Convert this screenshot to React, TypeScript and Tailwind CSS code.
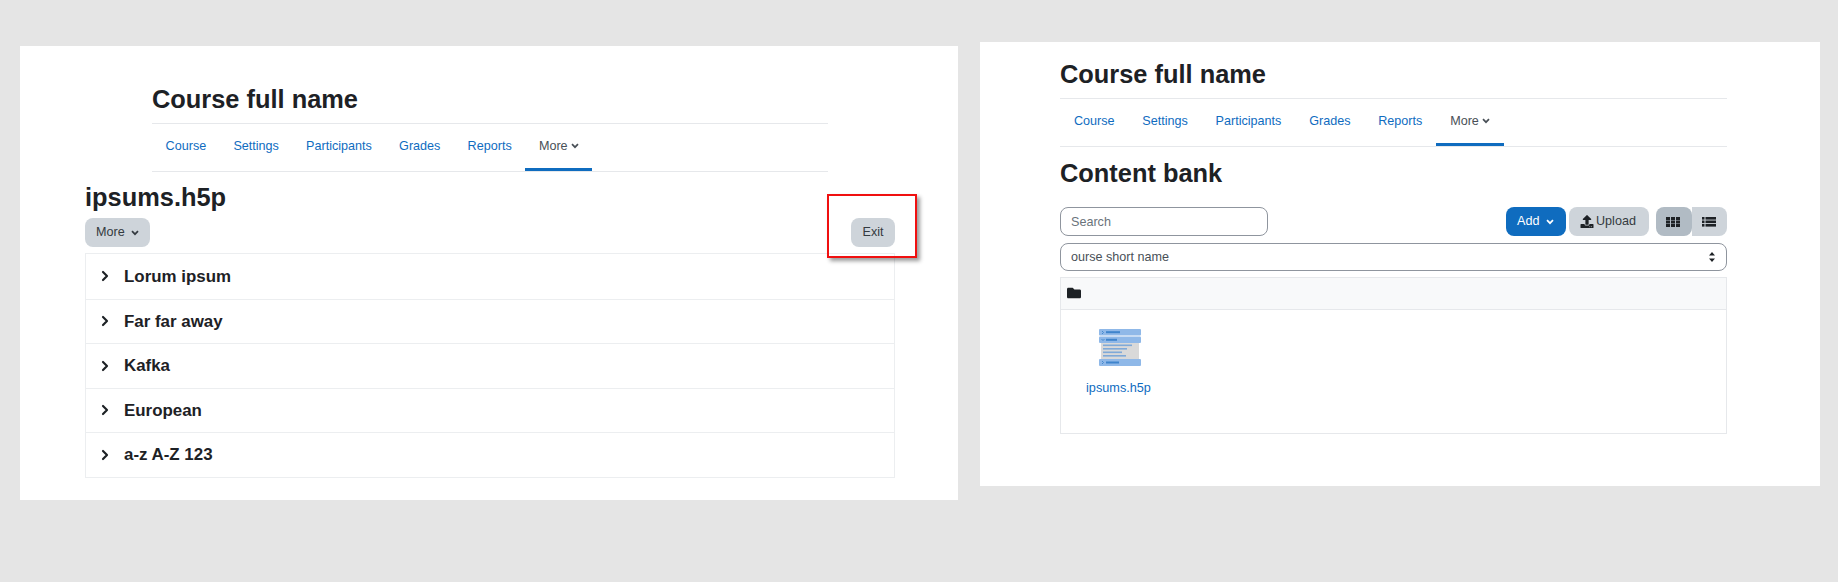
import { ChevronRight } from "lucide-react";
import { FaFolder, FaUpload } from "react-icons/fa";

const tabs = ["Course", "Settings", "Participants", "Grades", "Reports"];
const sections = ["Lorum ipsum", "Far far away", "Kafka", "European", "a-z A-Z 123"];

function Caret({ className = "" }: { className?: string }) {
  return (
    <svg className={className} width="8" height="6" viewBox="0 0 8 6" fill="none" stroke="currentColor" strokeWidth="1.7">
      <path d="M1 1.2l3 3 3-3" />
    </svg>
  );
}

function CourseHeader({ wide = false }: { wide?: boolean }) {
  const pad = wide ? "px-[13.9px]" : "px-[13.6px]";
  return (
    <div>
      <h2 className="text-[25.4px] leading-[31px] font-bold text-[#1d2125] h-[39px]">Course full name</h2>
      <nav className="flex h-[47px] border-y border-[#e6e8eb] box-content text-[12.6px]">
        {tabs.map((tab) => (
          <a key={tab} className={`${pad} pt-[13px] text-[#0f6cbf]`}>
            {tab}
          </a>
        ))}
        <a className={`flex items-start gap-[3px] ${pad} pt-[13px] text-[#495057] border-b-[3px] border-[#0f6cbf] h-[47px]`}>
          More
          <Caret className="mt-[6px]" />
        </a>
      </nav>
    </div>
  );
}

function AccordionRow({ label }: { label: string }) {
  return (
    <div className="flex items-center h-[44.5px] border-t border-[#eceef0] first:border-t-0 pl-[11px] gap-[11px]">
      <ChevronRight className="w-[16px] h-[16px] text-[#1d2125]" strokeWidth={3.2} />
      <span className="text-[16.9px] font-bold text-[#1d2125]">{label}</span>
    </div>
  );
}

function GridIcon() {
  return (
    <svg width="14" height="10" viewBox="0 0 14 10" fill="#1d2125">
      {[0, 5, 10].map((x) =>
        [0, 3.5, 7].map((y) => <rect key={`${x}-${y}`} x={x} y={y} width="4" height="3" />)
      )}
    </svg>
  );
}

function ListIcon() {
  return (
    <svg width="14" height="10" viewBox="0 0 14 10" fill="#1d2125">
      {[0, 3.5, 7].map((y) => (
        <g key={y}>
          <rect x="0" y={y} width="2.5" height="2.6" />
          <rect x="3.5" y={y} width="10.5" height="2.6" />
        </g>
      ))}
    </svg>
  );
}

function H5pIcon() {
  return (
    <svg width="42" height="38" viewBox="0 0 42 38" className="mx-auto">
      <rect x="2" y="9" width="38" height="22" fill="#d9d9d9" />
      <rect x="0" y="0" width="42" height="6.5" rx="1" fill="#8fb8e8" />
      <rect x="0" y="7.5" width="42" height="6.5" rx="1" fill="#8fb8e8" />
      <rect x="0" y="30" width="42" height="7" rx="1" fill="#8fb8e8" />
      <path d="M3 2l1.5 1.5L3 5M2.5 10l1.5 1.5L5.5 10M3 32l1.5 1.5L3 35" fill="none" stroke="#3f84cc" strokeWidth="0.9" />
      <rect x="7" y="2.2" width="14" height="2" fill="#3f84cc" />
      <rect x="7" y="9.8" width="11" height="2" fill="#3f84cc" />
      <rect x="7" y="32.5" width="13" height="2" fill="#3f84cc" />
      <rect x="4" y="15.5" width="29" height="1.6" fill="#7fa9d8" />
      <rect x="4" y="19" width="24" height="1.6" fill="#7fa9d8" />
      <rect x="4" y="22.5" width="19" height="1.6" fill="#7fa9d8" />
      <rect x="4" y="26" width="23" height="1.6" fill="#7fa9d8" />
    </svg>
  );
}

export default function App() {
  return (
    <div className="flex items-start w-[1838px] h-[582px] bg-[#e5e5e5] pl-5 gap-[22px] font-['Liberation_Sans',sans-serif] overflow-hidden">
      {/* Left: activity page */}
      <section className="relative mt-[46px] w-[938px] h-[454px] bg-white pl-[65px] pt-[38px]">
        <div className="ml-[67px] w-[676px]">
          <CourseHeader />
        </div>
        <h2 className="mt-[10px] text-[25.4px] leading-[31px] font-bold text-[#1d2125]">ipsums.h5p</h2>
        <div className="flex justify-between w-[810px] mt-[5px] text-[12.6px]">
          <button className="flex items-center gap-[6px] h-[29px] w-[65px] pl-[11px] rounded-lg bg-[#ced4da] text-[#343a40]">
            More
            <Caret />
          </button>
          <button className="h-[29px] w-[44px] rounded-lg bg-[#ced4da] text-[#343a40]">Exit</button>
        </div>
        <div className="mt-[6px] w-[810px] border border-[#eceef0]">
          {sections.map((s) => (
            <AccordionRow key={s} label={s} />
          ))}
        </div>
        {/* Annotation box drawn over the screenshot */}
        <div className="absolute left-[807px] top-[148px] w-[90px] h-[64px] border-2 border-[#f01010] shadow-[3px_3px_4px_rgba(0,0,0,0.4)]" />
      </section>

      {/* Right: content bank */}
      <section className="mt-[42px] w-[840px] h-[444px] bg-white pl-[80px] pt-[17px]">
        <div className="w-[667px]">
          <CourseHeader wide />
          <h2 className="mt-[11px] text-[25.4px] leading-[31px] font-bold text-[#1d2125]">Content bank</h2>
          <div className="flex items-center mt-[18px] text-[12.6px]">
            <input
              placeholder="Search"
              className="w-[208px] h-[29px] px-[10px] rounded-lg border border-[#8f959e] placeholder:text-[#6a737b] outline-none"
            />
            <button className="ml-auto flex items-center gap-[7px] h-[29px] w-[60px] pl-[11px] rounded-lg bg-[#0f6cbf] text-white">
              Add
              <Caret />
            </button>
            <button className="ml-[3px] flex items-center gap-[2px] h-[29px] w-[80px] pl-[11px] rounded-lg bg-[#ced4da] text-[#343a40]">
              <FaUpload className="w-[14px] h-[13px] text-[#1d2125]" />
              Upload
            </button>
            <button className="ml-[7px] flex items-center justify-center h-[29px] w-[36px] pr-[2px] rounded-lg bg-[#b1bbc4]">
              <GridIcon />
            </button>
            <button className="flex items-center justify-center h-[29px] w-[35px] pr-[2px] rounded-r-lg bg-[#ced4da]">
              <ListIcon />
            </button>
          </div>
          <div className="flex items-center justify-between mt-[7px] h-[28px] px-[10px] rounded-lg border border-[#8f959e] text-[12.6px] text-[#495057]">
            ourse short name
            <svg width="8" height="10" viewBox="0 0 8 10" fill="#1d2125">
              <path d="M4 0l3 3.6H1zM4 10L1 6.4h6z" />
            </svg>
          </div>
          <div className="mt-[6px] h-[157px] border border-[#e6e8eb]">
            <div className="flex items-center h-[32px] pl-[6px] pb-[2px] bg-[#f8f9fa] border-b border-[#e6e8eb]">
              <FaFolder className="w-[14px] h-[14px] text-[#1d2125]" />
            </div>
            <div className="w-[113px] pt-[19px] pl-[4px] text-center">
              <H5pIcon />
              <a className="block mt-[12px] -ml-[2px] text-[12.7px] text-[#0f6cbf]">ipsums.h5p</a>
            </div>
          </div>
        </div>
      </section>
    </div>
  );
}
